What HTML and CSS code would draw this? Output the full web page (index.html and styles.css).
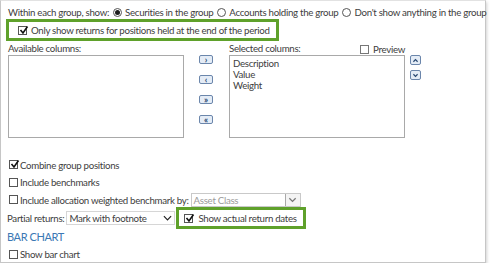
FILE: index.html
```html
<!DOCTYPE html>
<html lang="en">
<head>
    <meta charset="UTF-8">
    <title>Group Options</title>
    <link rel="stylesheet" href="styles.css">
</head>
<body>
    <div class="panel">
        <div class="row show-row">
            <span>Within each group, show:</span>
            <span class="radio on"></span><span>Securities in the group</span>
            <span class="radio"></span><span>Accounts holding the group</span>
            <span class="radio"></span><span>Don't show anything in the group</span>
        </div>

        <div class="highlight top-box">
            <span class="cb on"><svg viewBox="0 0 10 10"><path d="M1.5 5 L4 8 L8.5 1.5" /></svg></span>
            <span>Only show returns for positions held at the end of the period</span>
        </div>

        <div class="columns">
            <div class="col">
                <div class="col-label">Available columns:</div>
                <div class="listbox"></div>
            </div>
            <div class="moves">
                <span class="mini">&rsaquo;</span>
                <span class="mini">&lsaquo;</span>
                <span class="mini">&raquo;</span>
                <span class="mini">&laquo;</span>
            </div>
            <div class="col">
                <div class="col-label split">
                    <span>Selected columns:</span>
                    <span class="preview"><span class="cb"></span>Preview</span>
                </div>
                <div class="listbox">
                    <div>Description</div>
                    <div>Value</div>
                    <div>Weight</div>
                </div>
            </div>
            <div class="order">
                <span class="mini arrow"><svg viewBox="0 0 8 6"><path d="M1.5 4.5 L4 2 L6.5 4.5" /></svg></span>
                <span class="mini arrow"><svg viewBox="0 0 8 6"><path d="M1.5 1.5 L4 4 L6.5 1.5" /></svg></span>
            </div>
        </div>

        <div class="options">
            <div class="row opt">
                <span class="cb on"><svg viewBox="0 0 10 10"><path d="M1.5 5 L4 8 L8.5 1.5" /></svg></span>Combine group positions
            </div>
            <div class="row opt">
                <span class="cb"></span>Include benchmarks
            </div>
            <div class="row opt">
                <span class="cb"></span>Include allocation weighted benchmark by:
                <span class="select disabled">Asset Class<span class="drop"><svg viewBox="0 0 10 6"><path d="M1.5 1 L5 4.5 L8.5 1" /></svg></span></span>
            </div>
            <div class="row partial">
                <span>Partial returns:</span>
                <span class="select plain">Mark with footnote<svg viewBox="0 0 10 6"><path d="M1 1 L5 5 L9 1" /></svg></span>
                <span class="highlight small-box">
                    <span class="cb on"><svg viewBox="0 0 10 10"><path d="M1.5 5 L4 8 L8.5 1.5" /></svg></span>
                    <span>Show actual return dates</span>
                </span>
            </div>
            <div class="section">BAR CHART</div>
            <div class="row opt">
                <span class="cb"></span>Show bar chart
            </div>
        </div>
    </div>
</body>
</html>
```

FILE: styles.css
```css
body {
    margin: 0;
    background: #ffffff;
    font-family: Lato, "Noto Sans", sans-serif;
    font-size: 9.7px;
    letter-spacing: -0.3px;
    color: #404040;
    white-space: nowrap;
}

.panel {
    width: 486px;
    height: 263px;
    border: 1px solid #c6c6c6;
    border-top-color: #e2e2e2;
    box-shadow: 1px 2px 3px rgba(0, 0, 0, 0.18);
    box-sizing: border-box;
    padding: 4px 0 0 0;
    background: #fff;
}

.row {
    display: flex;
    align-items: center;
}

.show-row {
    height: 14px;
    padding-left: 7px;
}

.show-row .radio {
    margin: 0 3px 0 4px;
}

.radio {
    width: 9px;
    height: 9px;
    flex: none;
    border: 1px solid #555;
    border-radius: 50%;
    box-sizing: border-box;
    display: inline-flex;
    align-items: center;
    justify-content: center;
}

.radio.on::after {
    content: "";
    width: 5px;
    height: 5px;
    border-radius: 50%;
    background: #1e1e1e;
}

.cb {
    width: 9px;
    height: 9px;
    border: 1px solid #555;
    box-sizing: border-box;
    display: inline-block;
    position: relative;
    flex: none;
    margin-right: 2px;
    background: #fff;
}

.cb svg {
    position: absolute;
    left: 0;
    top: -2px;
    width: 10px;
    height: 10px;
}

.cb path {
    fill: none;
    stroke: #111;
    stroke-width: 1.6;
}

.highlight {
    border: 3px solid #5fa12b;
    display: flex;
    align-items: center;
    box-sizing: border-box;
}

.top-box {
    width: 273px;
    height: 22px;
    margin: 0 0 0 5px;
    padding-left: 9px;
}

.top-box .cb {
    margin-right: 4px;
}

.columns {
    display: flex;
    padding-left: 7px;
    margin-top: 1px;
}

.col {
    width: 176px;
}

.col-label {
    height: 13px;
    line-height: 13px;
}

.split {
    display: flex;
    justify-content: space-between;
}

.preview {
    display: flex;
    align-items: center;
    margin-top: 1px;
}

.preview .cb {
    margin-right: 4px;
    border-color: #777;
}

.listbox {
    height: 83px;
    border: 1px solid #a9a9a9;
    box-sizing: border-box;
    padding: 2px 3px;
    line-height: 11px;
}

.moves {
    display: flex;
    flex-direction: column;
    gap: 11px;
    margin: 13px 16px 0 15px;
}

.order {
    display: flex;
    flex-direction: column;
    gap: 5px;
    margin: 13px 0 0 5px;
}

.mini {
    width: 14px;
    height: 9px;
    border: 1px solid #6b86ab;
    border-radius: 2px;
    background: #e4ecf6;
    color: #25456e;
    font-size: 9px;
    font-weight: bold;
    line-height: 7px;
    letter-spacing: 0;
    text-align: center;
    box-sizing: border-box;
}

.mini.arrow {
    width: 11px;
    height: 10px;
    display: flex;
    align-items: center;
    justify-content: center;
}

.mini.arrow svg {
    width: 7px;
    height: 5px;
}

.mini.arrow path {
    fill: none;
    stroke: #25456e;
    stroke-width: 1.4;
}

.options {
    padding-left: 8px;
    margin-top: 18px;
}

.opt {
    height: 17.5px;
}

.select {
    display: inline-flex;
    align-items: center;
    box-sizing: border-box;
    height: 14px;
    border: 1px solid #c9c9c9;
    padding-left: 2px;
}

.select.disabled {
    width: 110px;
    margin-left: 2px;
    color: #9a9a9a;
    justify-content: space-between;
}

.drop {
    width: 14px;
    height: 12px;
    border-left: 1px solid #a9a9a9;
    display: flex;
    align-items: center;
    justify-content: center;
    background: #f4f4f4;
}

.drop svg {
    width: 9px;
    height: 6px;
}

.drop path {
    fill: none;
    stroke: #777;
    stroke-width: 1.4;
}

.partial {
    height: 19px;
    margin-left: -2px;
}

.select.plain {
    width: 109px;
    margin-left: 2px;
    justify-content: space-between;
    padding-right: 2px;
    border-color: #d6d6d6;
}

.select.plain svg {
    width: 9px;
    height: 6px;
}

.select.plain path {
    fill: none;
    stroke: #222;
    stroke-width: 1.3;
}

.small-box {
    width: 130px;
    height: 22px;
    margin-left: 1px;
    padding-left: 5px;
}

.small-box .cb {
    margin-right: 5px;
}

.section {
    color: #3b78b4;
    font-size: 11px;
    letter-spacing: -0.4px;
    height: 18px;
    line-height: 18px;
    margin-left: -2px;
}
```
